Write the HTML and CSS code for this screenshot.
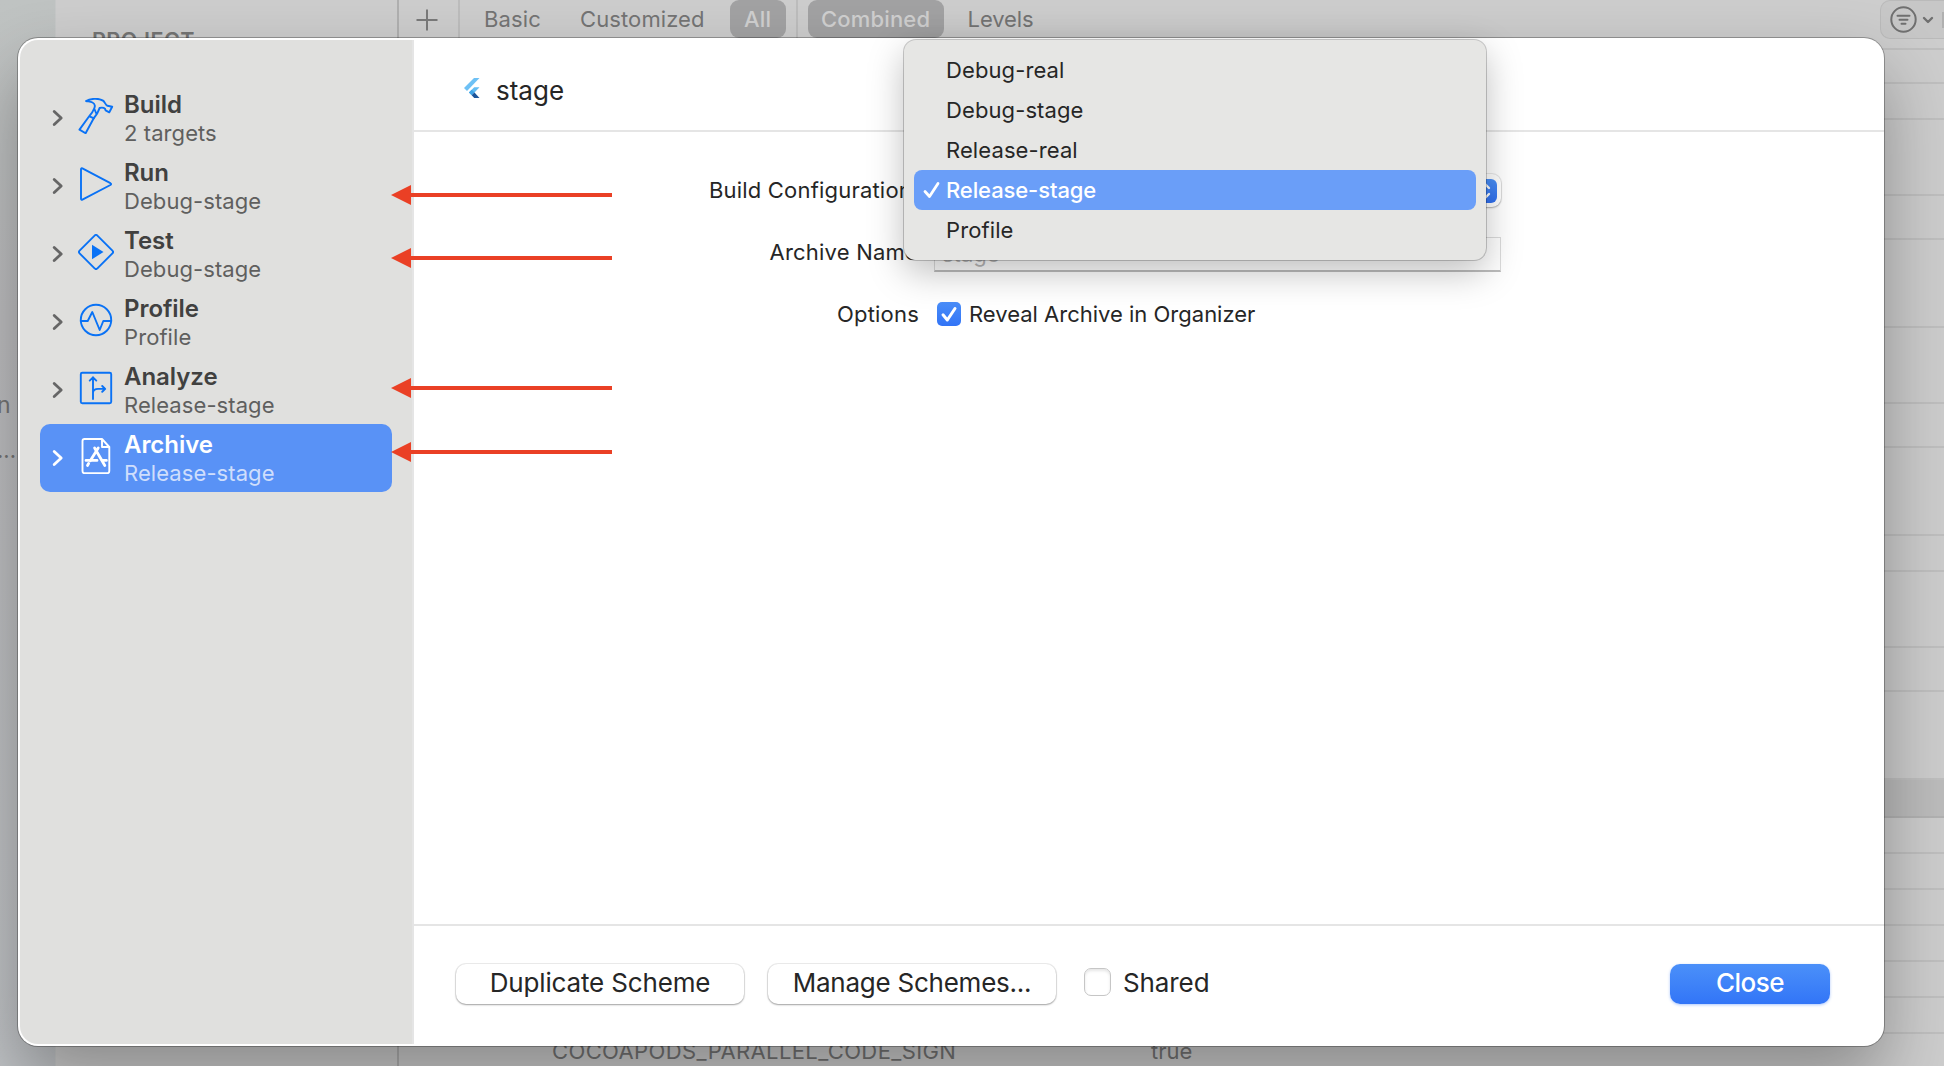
FILE: index.html
```html
<!DOCTYPE html>
<html lang="en">
<head>
<meta charset="utf-8">
<title>Scheme editor</title>
<link rel="stylesheet" href="styles.css">
</head>
<body>
<div class="screen">
  <div class="backdrop">
    <div class="navigator">
      <span class="nav-clip nav-clip-a">n</span>
      <span class="nav-clip nav-clip-b">...</span>
    </div>
    <div class="targets">PROJECT</div>
    <div class="settings">
      <div class="toolbar">
        <div class="add"><svg width="22" height="22" viewBox="0 0 22 22"><path d="M11 0.500V21.500M0.500 11H21.500" stroke="#7a7a7a" stroke-width="2" fill="none"/></svg></div>
        <span class="tab basic">Basic</span>
        <span class="tab customized">Customized</span>
        <span class="tab pill all">All</span>
        <i class="tab-line"></i>
        <span class="tab pill combined">Combined</span>
        <span class="tab levels">Levels</span>
        <div class="filter">
          <svg width="27" height="27" viewBox="0 0 27 27" fill="none" stroke="#707070" stroke-width="2" stroke-linecap="round"><circle cx="13.5" cy="13.5" r="12.2"/><path d="M7.500 9.700h12M9.500 13.700h8M11.500 17.700h4"/></svg>
          <svg width="12" height="8" viewBox="0 0 12 8" fill="none" stroke="#707070" stroke-width="2.4" stroke-linecap="round" stroke-linejoin="round"><path d="M2 2l4 4 4-4"/></svg>
          <i class="filter-text"></i>
        </div>
      </div>
      <div class="rows">
        <i style="height:34px"></i><i style="height:36px"></i><i style="height:76px"></i><i style="height:44px"></i><i style="height:88px"></i><i style="height:76px"></i><i style="height:44px"></i><i style="height:88px"></i><i style="height:36px"></i><i style="height:76px"></i><i style="height:44px"></i><i style="height:88px"></i><i class="group" style="height:38px"></i><i style="height:36px"></i><i style="height:36px"></i><i style="height:36px"></i><i style="height:36px"></i><i style="height:36px"></i><i style="height:36px"></i>
        <div class="setting"><span class="key">COCOAPODS_PARALLEL_CODE_SIGN</span><span>true</span></div>
      </div>
    </div>
  </div>

  <div class="dialog">
    <div class="sidebar">
      <div class="item">
        <svg class="chev" viewBox="0 0 12 18"><path d="M2.200 2.500L9.200 9l-7 6.500"/></svg>
        <svg class="icon" viewBox="0 0 36 36"><path d="M8 3C12 .8 20-.4 25 2.600C27 4 27.300 7 29.500 7.800L34.200 8.700 31.300 14.300 27.600 12.400C27.600 10 24.500 9 21.600 10L20.300 13C19.500 16 17 18 15.600 20.500L7.600 35.200 1.500 31.600 10.800 18.800C13 16 14.500 14.500 15.300 12.200C17.500 9 17.500 6 14.500 4.500C12.500 3.600 10 3.500 8 3zM11.500 18.300L16 20.300M16.200 10.500L18.500 16"/></svg>
        <div class="label"><b>Build</b><span>2 targets</span></div>
      </div>
      <div class="item">
        <svg class="chev" viewBox="0 0 12 18"><path d="M2.200 2.500L9.200 9l-7 6.500"/></svg>
        <svg class="icon" viewBox="0 0 36 36"><path d="M3 3.200C3 2.200 3.600 2 4.400 2.400L32.400 17.200C33.400 17.800 33.400 18.400 32.400 19L4.400 33.600C3.600 34 3 33.800 3 32.800z"/></svg>
        <div class="label"><b>Run</b><span>Debug-stage</span></div>
      </div>
      <div class="item">
        <svg class="chev" viewBox="0 0 12 18"><path d="M2.200 2.500L9.200 9l-7 6.500"/></svg>
        <svg class="icon" viewBox="0 0 36 36"><path d="M16.600 1.600Q18 .2 19.400 1.600L34.400 16.600Q35.800 18 34.400 19.400L19.400 34.400Q18 35.800 16.600 34.400L1.600 19.400Q.2 18 1.600 16.600z"/><path d="M14 10.800L25.500 18 14 25.200z" fill="#0a72f5" stroke="none"/></svg>
        <div class="label"><b>Test</b><span>Debug-stage</span></div>
      </div>
      <div class="item">
        <svg class="chev" viewBox="0 0 12 18"><path d="M2.200 2.500L9.200 9l-7 6.500"/></svg>
        <svg class="icon" viewBox="0 0 36 36"><circle cx="18" cy="18" r="15.200"/><path d="M2.700 19H9.700L14.300 10 21.700 28 25.300 19H33.300"/></svg>
        <div class="label"><b>Profile</b><span>Profile</span></div>
      </div>
      <div class="item">
        <svg class="chev" viewBox="0 0 12 18"><path d="M2.200 2.500L9.200 9l-7 6.500"/></svg>
        <svg class="icon" viewBox="0 0 36 36"><rect x="2.800" y="2.800" width="30.400" height="30.400" rx="1.500"/><path d="M15 7.300V29M11.700 10.600L15 7.300 18.300 10.600M15 22.500C15.500 19.800 17 18.900 20 18.900H27M24.200 16L27.200 18.900 24.200 21.800"/></svg>
        <div class="label"><b>Analyze</b><span>Release-stage</span></div>
      </div>
      <div class="item selected">
        <svg class="chev" viewBox="0 0 12 18"><path d="M2.200 2.500L9.200 9l-7 6.500"/></svg>
        <svg class="icon" viewBox="0 0 36 36"><path d="M6.500 1H24L31.300 9V33Q31.300 35.200 29.300 35.200H6.500Q4.500 35.200 4.500 33V3Q4.500 1 6.500 1zM24 1V9H31.300"/><path d="M20.200 10L12.300 22.800M16.600 10L26.800 27.500M10.600 25.500L9.500 27.500" stroke-width="2.800"/><path d="M8 22.400H19M24.500 22.400H28.400" stroke-width="2.800"/></svg>
        <div class="label"><b>Archive</b><span>Release-stage</span></div>
      </div>
    </div>

    <div class="main">
      <div class="head">
        <svg width="16" height="20" viewBox="0 0 16 20"><path d="M10 0H15.500L3 13 0 10z" fill="#6ec1f5"/><path d="M10.200 9.200H15.500L10.500 14.500 7.700 17.200 4.900 14.500z" fill="#64bdf3"/><path d="M7.700 11.700L10.500 14.500 7.700 17.200 4.900 14.500z" fill="#3fa4e6"/><path d="M7.700 17.200L10.500 14.500 15.500 20H10.200z" fill="#1c559b"/></svg>
        <span>stage</span>
      </div>
      <div class="form">
        <label class="build-label">Build Configuration</label><div class="popup"><span class="stepper"><svg width="12" height="18" viewBox="0 0 12 18" fill="none" stroke="#fff" stroke-width="2.400" stroke-linecap="round" stroke-linejoin="round"><path d="M2 6l4-4 4 4M2 12l4 4 4-4"/></svg></span></div>
        <label class="name-label">Archive Name</label><div class="field">stage</div>
        <label>Options</label><div class="check"><span class="box on"><svg width="24" height="24" viewBox="0 0 24 24" fill="none" stroke="#fff" stroke-width="3" stroke-linecap="round" stroke-linejoin="round"><path d="M6 12.800L10.300 18 18 6.500"/></svg></span>Reveal Archive in Organizer</div>
      </div>
      <div class="foot">
        <span class="btn dup">Duplicate Scheme</span>
        <span class="btn man">Manage Schemes...</span>
        <span class="box off"></span>
        <span class="shared">Shared</span>
        <span class="btn close">Close</span>
      </div>
    </div>
  </div>

  <div class="menu">
    <div>Debug-real</div>
    <div>Debug-stage</div>
    <div>Release-real</div>
    <div class="picked"><svg width="18" height="18" viewBox="0 0 18 18" fill="none" stroke="#fff" stroke-width="2.800" stroke-linecap="round" stroke-linejoin="round"><path d="M2 10.500L6.500 15.500 15 2.500"/></svg>Release-stage</div>
    <div>Profile</div>
  </div>

  <svg class="arrows" width="222" height="280" viewBox="0 0 222 280" fill="#ea4025">
    <path d="M0 10L20 0V8H221V12H20V20z"/>
    <path d="M0 73L20 63V71H221V75H20V83z"/>
    <path d="M0 203L20 193V201H221V205H20V213z"/>
    <path d="M0 267L20 257V265H221V269H20V277z"/>
  </svg>
</div>
</body>
</html>
```
FILE: styles.css
```css
* { box-sizing: border-box; }
body { margin: 0; font-family: Inter, "Liberation Sans", sans-serif; font-size: 22px; color: #262626; }
.screen { position: relative; width: 1944px; height: 1066px; overflow: hidden; }

/* dimmed window behind the sheet */
.backdrop { display: flex; height: 1066px; background: #cdcdcd; color: #747474; }
.navigator { position: relative; width: 56px; background: linear-gradient(#bfc3c2, #bdbdbf 30%, #c0c3c6); border-right: 1px solid #c6c8c8; }
.nav-clip { position: absolute; line-height: 28px; }
.nav-clip-a { left: -3px; top: 391px; font-size: 23px; }
.nav-clip-b { left: -3px; top: 436px; }
.targets { width: 341px; padding: 26px 0 0 36px; line-height: 28px; font-weight: 600; font-size: 21.5px; letter-spacing: .4px; }
.settings { width: 1547px; border-left: 2px solid #b0b0b0; }
.toolbar { display: flex; height: 48px; align-items: flex-start; line-height: 38px; }
.add { width: 61px; height: 38px; padding: 9px 0 0 17px; border-right: 2px solid #bdbdbd; line-height: 0; }
.tab { letter-spacing: .15px; }
.basic { margin-left: 24px; }
.customized { margin-left: 39px; letter-spacing: .1px; }
.pill { height: 38px; border-radius: 9px; background: #a2a2a3; color: #d0d0d0; font-weight: 500; text-align: center; }
.all { width: 56px; margin-left: 25px; }
.tab-line { width: 2px; height: 38px; margin: 0 10px; background: #bdbdbd; }
.combined { width: 136px; }
.levels { margin-left: 24px; letter-spacing: -.1px; }
.filter { display: flex; align-items: center; gap: 5px; width: 64px; height: 39px; margin-left: auto; padding-left: 9px; border: 1px solid #bababa; border-right: 0; border-radius: 10px 0 0 10px; background: #c7c7c7; overflow: hidden; }
.filter svg { flex: none; }
.filter-text { flex: none; width: 4px; height: 16px; margin-left: 3px; background: #b0b0b0; }
.rows { border-top: 2px solid #bfbfbf; }
.rows i { display: block; border-bottom: 2px solid #bfbfbf; }
.rows .group { background: #bcbcbc; border-color: #b2b2b2; }
.setting { display: flex; padding-left: 153px; line-height: 28px; margin-top: 3px; }
.key { width: 599px; letter-spacing: .38px; }

/* sheet */
.dialog { position: absolute; left: 18px; top: 38px; width: 1866px; height: 1008px; display: flex; overflow: hidden; border-radius: 20px; background: #fff; box-shadow: 0 0 0 1px rgba(0,0,0,.28), 0 34px 70px rgba(0,0,0,.32); }
.sidebar { width: 394px; margin: 2px 0 2px 2px; padding: 44px 20px 0; background: #e0e0de; border-right: 2px solid #e5e5e5; border-radius: 18px 0 0 18px; }
.item { display: flex; height: 68px; padding-left: 12px; border-radius: 10px; }
.chev { width: 12px; height: 18px; margin-top: 25px; fill: none; stroke: #666; stroke-width: 2.8; stroke-linecap: round; stroke-linejoin: round; }
.icon { width: 36px; height: 36px; margin: 14px 10px 0 14px; fill: none; stroke: #0a72f5; stroke-width: 1.9; stroke-linecap: round; stroke-linejoin: round; }
.label { padding-top: 7px; color: #5f5f5e; }
.label b { display: block; font-size: 24px; font-weight: 600; line-height: 28px; color: #414140; letter-spacing: -.05px; }
.label span { display: block; line-height: 29px; letter-spacing: .08px; }
.selected { background: #5992f6; }
.selected .chev, .selected .icon { stroke: #fff; }
.selected .label { color: #cfdefc; }
.selected .label b { color: #fff; }

.main { width: 1470px; display: flex; flex-direction: column; }
.head { display: flex; height: 94px; padding: 40px 0 0 50px; border-bottom: 2px solid #e5e5e5; font-size: 26px; line-height: 25px; gap: 16px; }
.form { display: grid; grid-template-columns: 505px 567px; column-gap: 15px; grid-auto-rows: 62px; align-content: start; padding-top: 27px; height: 792px; line-height: 62px; }
.form label { text-align: right; letter-spacing: .2px; }
.form .build-label { padding-right: 7px; white-space: nowrap; }
.form .name-label { padding-right: 1px; }
.popup { height: 33px; margin-top: 15px; padding: 5px 4px 0 0; border-radius: 9px; background: #fff; box-shadow: 0 0 0 1px rgba(0,0,0,.08), 0 1px 2px rgba(0,0,0,.25); }
.stepper { display: flex; align-items: center; justify-content: center; width: 24px; height: 24px; margin-left: auto; border-radius: 6px; background: linear-gradient(#4a90f8, #2f6ff0); }
.field { height: 35px; margin-top: 16px; padding-left: 7px; border: 1px solid #dcdcdc; border-bottom: 2px solid #bcbcbc; line-height: 32px; color: #b9b9b9; }
.check { display: flex; align-items: center; padding-left: 3px; gap: 8px; }
.box { flex: none; display: block; line-height: 0; }
.on { width: 24px; height: 24px; border-radius: 5px; background: linear-gradient(#4a8ef9, #3274f6); }
.foot { display: flex; height: 122px; padding: 38px 54px 0 42px; border-top: 2px solid #e5e5e5; font-size: 26px; line-height: 38px; }
.btn { height: 40px; border-radius: 10px; text-align: center; box-shadow: 0 0 0 1px rgba(0,0,0,.07), 0 1px 2px rgba(0,0,0,.32); }
.dup { width: 288px; letter-spacing: -.16px; }
.man { width: 288px; margin-left: 24px; letter-spacing: -.24px; }
.off { width: 27px; height: 28px; margin: 4px 12px 0 28px; border-radius: 7px; border: 1px solid #c6c6c6; box-shadow: inset 0 2px 3px rgba(0,0,0,.1); }
.shared { letter-spacing: -.1px; }
.close { width: 160px; margin-left: auto; background: linear-gradient(#4b90f9, #3275f7); color: #fff; font-weight: 500; letter-spacing: -.5px; box-shadow: 0 1px 3px rgba(50,117,247,.4); }

/* configuration menu */
.menu { position: absolute; left: 904px; top: 40px; width: 582px; height: 220px; padding: 10px; border-radius: 12px; background: #e6e6e4; box-shadow: 0 0 0 1px rgba(0,0,0,.2), 0 12px 36px rgba(0,0,0,.26); }
.menu div { position: relative; height: 40px; padding-left: 32px; border-radius: 8px; line-height: 40px; letter-spacing: .1px; }
.menu .picked { background: #6a9ef8; color: #fff; font-weight: 500; letter-spacing: -.1px; }
.picked svg { position: absolute; left: 9px; top: 11px; }
.arrows { position: absolute; left: 391px; top: 185px; }
```
